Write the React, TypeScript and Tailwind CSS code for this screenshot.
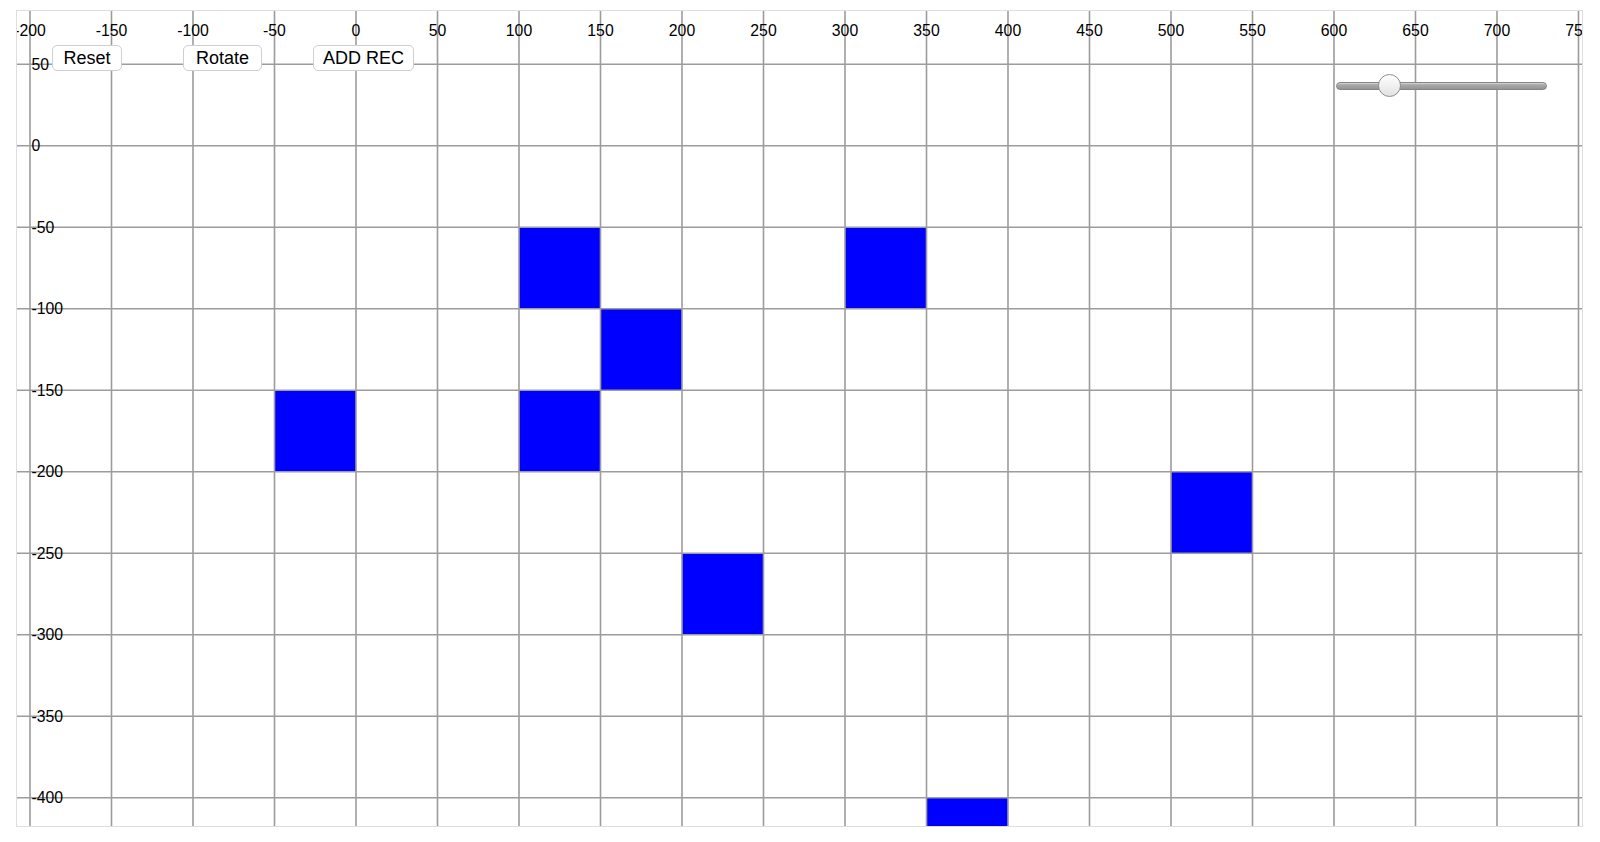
import React from "react";

const S = 1.63;
const OX = 339; // inner x of value 0
const OY = 134.7; // inner y of value 0
const W = 1565;
const H = 815;

const X = (v: number) => OX + S * v;
const Y = (v: number) => OY - S * v;

const xs: number[] = [];
for (let v = -200; v <= 750; v += 50) xs.push(v);
const ys: number[] = [];
for (let v = 50; v >= -400; v -= 50) ys.push(v);

const rects: [number, number][] = [
  [100, -50],
  [300, -50],
  [150, -100],
  [-50, -150],
  [100, -150],
  [500, -200],
  [200, -250],
  [350, -400],
];

const font = '"Liberation Sans", Arial, Helvetica, sans-serif';

function Grid() {
  return (
    <svg width={W} height={H} viewBox={`0 0 ${W} ${H}`} className="block">
      {rects.map(([a, b], i) => (
        <rect key={i} x={X(a)} y={Y(b)} width={S * 50} height={S * 50} fill="#0000ff" />
      ))}
      {xs.map((v) => (
        <line key={"vx" + v} x1={X(v)} x2={X(v)} y1={0} y2={H} stroke="#9c9c9c" strokeWidth={1.6} />
      ))}
      {ys.map((v) => (
        <line key={"hy" + v} x1={0} x2={W} y1={Y(v)} y2={Y(v)} stroke="#9c9c9c" strokeWidth={1.6} />
      ))}
      {xs.map((v) => (
        <text
          key={"tx" + v}
          x={X(v)}
          y={25.2}
          textAnchor="middle"
          fontSize={15.8}
          fontFamily={font}
          fill="#000"
        >
          {v}
        </text>
      ))}
      {ys.map((v) => (
        <text key={"ty" + v} x={X(-200) + 1.5} y={Y(v) + 5.6} fontSize={15.8} fontFamily={font} fill="#000">
          {v}
        </text>
      ))}
    </svg>
  );
}

export default function App() {
  return (
    <div className="min-h-screen bg-white pl-[16px] pt-[10px]" style={{ fontFamily: font }}>
      <div className="relative box-content h-[815px] w-[1565px] overflow-hidden border border-[#dedede]">
        <Grid />
        <button className="absolute left-[35px] top-[34px] flex h-[26px] w-[70px] items-center justify-center rounded-[5px] border border-[#cfcfcf] bg-white text-[18px] leading-none text-black">
          Reset
        </button>
        <button className="absolute left-[166px] top-[34px] flex h-[26px] w-[79px] items-center justify-center rounded-[5px] border border-[#cfcfcf] bg-white text-[18px] leading-none text-black">
          Rotate
        </button>
        <button className="absolute left-[296px] top-[34px] flex h-[26px] w-[101px] items-center justify-center rounded-[5px] border border-[#cfcfcf] bg-white text-[18px] leading-none text-black">
          ADD REC
        </button>
        <div className="absolute left-[1319px] top-[63px] h-[24px] w-[211px]">
          <div className="absolute left-0 right-0 top-[8px] h-[8px] rounded-full border border-[#858585] bg-gradient-to-b from-[#b8b8b8] via-[#a3a3a3] to-[#949494] shadow-[inset_0_1px_0_rgba(255,255,255,0.35)]" />
          <div className="absolute left-[42px] top-0 h-[23px] w-[23px] rounded-full border border-[#8e8e8e] bg-gradient-to-b from-[#ffffff] to-[#e2e2e2]" />
        </div>
      </div>
    </div>
  );
}
